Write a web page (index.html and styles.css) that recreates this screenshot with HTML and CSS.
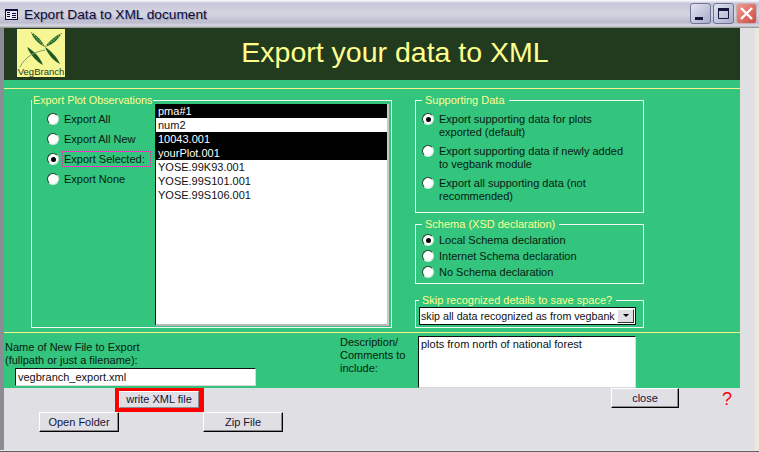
FILE: index.html
```html
<!DOCTYPE html>
<html lang="en">
<head>
    <meta charset="UTF-8">
    <title>Export Data to XML document</title>
    <link rel="stylesheet" href="styles.css">
</head>
<body>
<div class="window">
    <div class="titlebar">
        <svg class="app-icon" width="13" height="11" viewBox="0 0 13 11">
            <rect x="0.5" y="0.5" width="12" height="10" fill="#e8e8f0" stroke="#0a0a3c"/>
            <rect x="1" y="1" width="11" height="1" fill="#0a0a3c"/>
            <path d="M2 3.500h3M2 5.500h3M2 7.500h3M7 4.500h4M7 6.500h4M7 8.500h4" stroke="#0a0a3c" stroke-width="1"/>
        </svg>
        <span class="title">Export Data to XML document</span>
        <div class="win-buttons">
            <div class="win-btn">
                <svg width="21" height="21" viewBox="0 0 21 21"><rect x="5" y="14" width="8" height="3" fill="#14143c"/></svg>
            </div>
            <div class="win-btn">
                <svg width="21" height="21" viewBox="0 0 21 21"><path d="M5.500 5.500h10v10h-10z" fill="none" stroke="#14143c"/><rect x="5" y="5" width="11" height="3" fill="#14143c"/></svg>
            </div>
            <div class="win-btn win-close">
                <svg width="21" height="21" viewBox="0 0 21 21"><path d="M5 5l11 11M16 5L5 16" stroke="#fff" stroke-width="2.400"/></svg>
            </div>
        </div>
    </div>

    <div class="client">
        <div class="form">
            <div class="header">
                <div class="logo">
                    <svg width="48" height="38" viewBox="0 0 48 38">
                        <path d="M14 3C21 7 25 12 28 18C22 15 16 10 14 3Z" fill="#2b6e2f"/>
                        <path d="M45 4C38 7 32 12 28 18C35 16 41 11 45 4Z" fill="#2b6e2f"/>
                        <path d="M28 18C34 22 40 28 43 35C37 32 31 26 28 18Z" fill="#1c5a22"/>
                        <path d="M10 18C17 22 23 28 26 36C20 33 14 27 10 18Z" fill="#1c5a22"/>
                        <path d="M15 4L27 17M44 5L29 17" stroke="#f6f694" stroke-width="1" stroke-dasharray="1 2" fill="none"/>
                        <path d="M28 21C17 23 8 28 3 38" stroke="#7d9a72" stroke-width="1" fill="none"/>
                    </svg>
                    <span class="logo-text">VegBranch</span>
                </div>
                <h1>Export your data to XML</h1>
            </div>

            <div class="main">
                <fieldset class="group plots">
                    <legend>Export Plot Observations</legend>
                    <div class="plot-options">
                        <label class="radio"><span class="dot"></span>Export All</label>
                        <label class="radio"><span class="dot"></span>Export All New</label>
                        <label class="radio"><span class="dot on"></span><span class="focused">Export Selected:</span></label>
                        <label class="radio"><span class="dot"></span>Export None</label>
                    </div>
                    <ul class="listbox">
                        <li class="sel">pma#1</li>
                        <li>num2</li>
                        <li class="sel">10043.001</li>
                        <li class="sel">yourPlot.001</li>
                        <li>YOSE.99K93.001</li>
                        <li>YOSE.99S101.001</li>
                        <li>YOSE.99S106.001</li>
                    </ul>
                </fieldset>

                <div class="side">
                    <fieldset class="group support">
                        <legend>Supporting Data</legend>
                        <label class="radio"><span class="dot on"></span><span>Export supporting data for plots<br>exported (default)</span></label>
                        <label class="radio"><span class="dot"></span><span>Export supporting data if newly added<br>to vegbank module</span></label>
                        <label class="radio"><span class="dot"></span><span>Export all supporting data (not<br>recommended)</span></label>
                    </fieldset>
                    <fieldset class="group schema">
                        <legend>Schema (XSD declaration)</legend>
                        <label class="radio"><span class="dot on"></span>Local Schema declaration</label>
                        <label class="radio"><span class="dot"></span>Internet Schema declaration</label>
                        <label class="radio"><span class="dot"></span>No Schema declaration</label>
                    </fieldset>
                    <fieldset class="group skip">
                        <legend>Skip recognized details to save space?</legend>
                        <div class="combo">
                            <span class="combo-text">skip all data recognized as from vegbank</span>
                            <span class="combo-arrow"></span>
                        </div>
                    </fieldset>
                </div>
            </div>

            <div class="file-row">
                <div class="file-name">
                    <div class="caption">Name of New File to Export<br>(fullpath or just a filename):</div>
                    <div class="textbox file-box">vegbranch_export.xml</div>
                </div>
                <div class="caption desc-label">Description/<br>Comments to<br>include:</div>
                <div class="textbox desc-box">plots from north of national forest</div>
            </div>
        </div>

        <div class="actions">
            <div class="action-col">
                <div class="write-outline"><button class="btn write">write XML file</button></div>
                <div class="action-row">
                    <button class="btn">Open Folder</button>
                    <button class="btn">Zip File</button>
                </div>
            </div>
            <button class="btn close">close</button>
            <span class="help">?</span>
        </div>
    </div>
</div>
</body>
</html>
```

FILE: styles.css
```css
* {
    box-sizing: border-box;
}
html, body {
    margin: 0;
    padding: 0;
}
body {
    width: 759px;
    height: 452px;
    overflow: hidden;
    font-family: "Liberation Sans", Arial, sans-serif;
    font-size: 11px;
    color: #06200f;
}
.window {
    width: 759px;
    height: 452px;
    background: #ece9d8;
    padding-bottom: 1px;
    border-bottom: 1px solid #5c5c74;
    display: flex;
    flex-direction: column;
}
.titlebar {
    flex: none;
    height: 28px;
    display: flex;
    align-items: center;
    padding: 0 2px 0 5px;
    background: linear-gradient(#fdfdff 0, #c6c6d8 12%, #d6d6e2 50%, #bcbccf 80%, #d8d8e4 92%, #8c8c8c 100%);
}
.app-icon {
    flex: none;
    margin-right: 6px;
}
.title {
    font-size: 13.700px;
    color: #0c0c3a;
    text-shadow: 1px 1px 1px #8f8fa8;
}
.win-buttons {
    margin-left: auto;
    display: flex;
    gap: 2px;
    margin-top: -1px;
}
.win-btn {
    width: 21px;
    height: 21px;
    border: 1px solid #6b7496;
    border-radius: 3px;
    background: linear-gradient(135deg, #e2e4f0, #a9adc9);
    display: flex;
}
.win-btn svg {
    margin: -1px;
    flex: none;
}
.win-close {
    background: linear-gradient(135deg, #ee9a90, #cc4b46);
    border-color: #c8b0b0;
}
.client {
    flex: 1;
    width: 755px;
    background: #e0dfe3;
    border-left: 4px solid #8c8c94;
}
.form {
    width: 736px;
    height: 360px;
    background: #33c47d;
}
.header {
    height: 52px;
    background: #223b1e;
    display: flex;
    padding: 1px 0 0 13px;
}
.logo {
    flex: none;
    width: 48px;
    height: 48px;
    background: #f6f694;
    display: flex;
    flex-direction: column;
    align-items: center;
    overflow: hidden;
}
.logo svg {
    flex: none;
}
.logo-text {
    font-size: 9.500px;
    line-height: 9px;
    color: #1c3d1c;
    white-space: nowrap;
}
h1 {
    margin: 0;
    width: 660px;
    text-align: center;
    font-size: 28.500px;
    font-weight: normal;
    line-height: 46px;
    color: #ffff8f;
}
.main {
    height: 244px;
    margin-top: 8px;
    border-top: 1px solid #f4f48c;
    padding: 5px 0 0 27px;
    display: flex;
    gap: 23px;
}
.group {
    margin: 0;
    padding: 0;
    border: 1px solid #f2f6f2;
    min-width: 0;
}
.group legend {
    color: #ffff8f;
    padding: 0 1px;
    line-height: 12px;
    white-space: nowrap;
}
.plots {
    flex: none;
    width: 361px;
    height: 234px;
    display: flex;
}
.plots legend {
    font-size: 10.800px;
}
.plot-options {
    flex: none;
    width: 108px;
    margin-left: 15px;
    padding-top: 6px;
    display: flex;
    flex-direction: column;
    gap: 6px;
}
.radio {
    display: flex;
    align-items: center;
    gap: 5px;
    line-height: 14px;
    white-space: nowrap;
}
.dot {
    flex: none;
    width: 12px;
    height: 12px;
    border-radius: 50%;
    background: #fff;
    border: 1px solid #20402c;
    border-right-color: #cfe8da;
    border-bottom-color: #cfe8da;
    display: flex;
    align-items: center;
    justify-content: center;
}
.dot.on::after {
    content: "";
    width: 5px;
    height: 5px;
    border-radius: 50%;
    background: #000;
}
.focused {
    outline: 1px dotted #f020b0;
    width: 87px;
    padding: 0 1px;
    margin-left: -1px;
}
.listbox {
    list-style: none;
    flex: none;
    margin: -2px 0 0;
    padding: 0;
    width: 234px;
    height: 222px;
    background: #fff;
    border-left: 1px solid #101010;
    border-bottom: 2px solid #b8b8b8;
    border-right: 2px solid #c8c8c8;
    color: #111;
}
.listbox li {
    height: 14px;
    line-height: 14px;
    padding-left: 2px;
}
.listbox li.sel {
    background: #000;
    color: #fff;
}
.side {
    flex: none;
    width: 229px;
    display: flex;
    flex-direction: column;
}
.side .group legend {
    padding: 0 4px 0 3px;
}
.support {
    height: 119px;
    padding: 7px 0 0 6px;
    display: flex;
    flex-direction: column;
    gap: 6px;
}
.support .radio {
    align-items: flex-start;
    line-height: 13px;
}
.schema {
    margin-top: 5px;
    height: 66px;
    padding: 3px 0 0 6px;
    display: flex;
    flex-direction: column;
    gap: 2px;
}
.skip {
    margin-top: 10px;
    height: 34px;
    padding: 1px 0 0 3px;
}
.combo {
    width: 217px;
    height: 18px;
    background: #fff;
    border: 1px solid #101010;
    display: flex;
    align-items: center;
    color: #111;
    padding-left: 1px;
}
.combo-text {
    flex: 1;
    font-size: 10.700px;
    white-space: nowrap;
}
.combo-arrow {
    flex: none;
    width: 17px;
    height: 14px;
    margin-right: 1px;
    background: #e0dfe3;
    border: 1px solid;
    border-color: #fff #333 #333 #fff;
    position: relative;
}
.combo-arrow::after {
    content: "";
    position: absolute;
    left: 5px;
    top: 4px;
    border: 3px solid transparent;
    border-top: 3px solid #000;
    border-bottom: 0;
}
.file-row {
    height: 56px;
    border-top: 1px solid #f4f48c;
    display: flex;
    padding-top: 3px;
}
.caption {
    line-height: 13px;
}
.file-name {
    flex: none;
    width: 336px;
    padding: 5px 0 0 1px;
}
.textbox {
    background: #fff;
    border: 1px solid #101010;
    border-right-color: #d8d8d8;
    border-bottom-color: #d8d8d8;
    color: #111;
    padding: 0 2px;
}
.file-box {
    width: 241px;
    height: 18px;
    margin: 1px 0 0 10px;
    line-height: 16px;
}
.desc-label {
    flex: none;
    width: 78px;
}
.desc-box {
    flex: none;
    width: 218px;
    height: 52px;
    line-height: 14px;
}
.actions {
    display: flex;
    align-items: flex-start;
    padding-left: 35px;
}
.action-col {
    flex: none;
    width: 244px;
    display: flex;
    flex-direction: column;
}
.write-outline {
    align-self: flex-start;
    margin-left: 76px;
    width: 89px;
    height: 24px;
    border: 4px solid #f00;
    border-top-width: 3px;
    border-right-width: 5px;
}
.btn {
    font: inherit;
    display: block;
    height: 20px;
    background: #e0dfe3;
    color: #14143c;
    border: 1px solid;
    border-color: #fff #000 #000 #fff;
    box-shadow: inset -1px -1px 0 #8c8c90;
    padding: 0;
    line-height: 16px;
}
.write {
    width: 80px;
    height: 17px;
    line-height: 13px;
    box-shadow: none;
    border-color: #fff #8c8c90 #8c8c90 #fff;
}
.action-row {
    display: flex;
    justify-content: space-between;
}
.action-row .btn {
    width: 80px;
}
.close {
    flex: none;
    width: 68px;
    margin-left: 328px;
}
.help {
    margin-left: 43px;
    margin-top: 1px;
    color: #f00;
    font-size: 18px;
    line-height: 20px;
}
```
